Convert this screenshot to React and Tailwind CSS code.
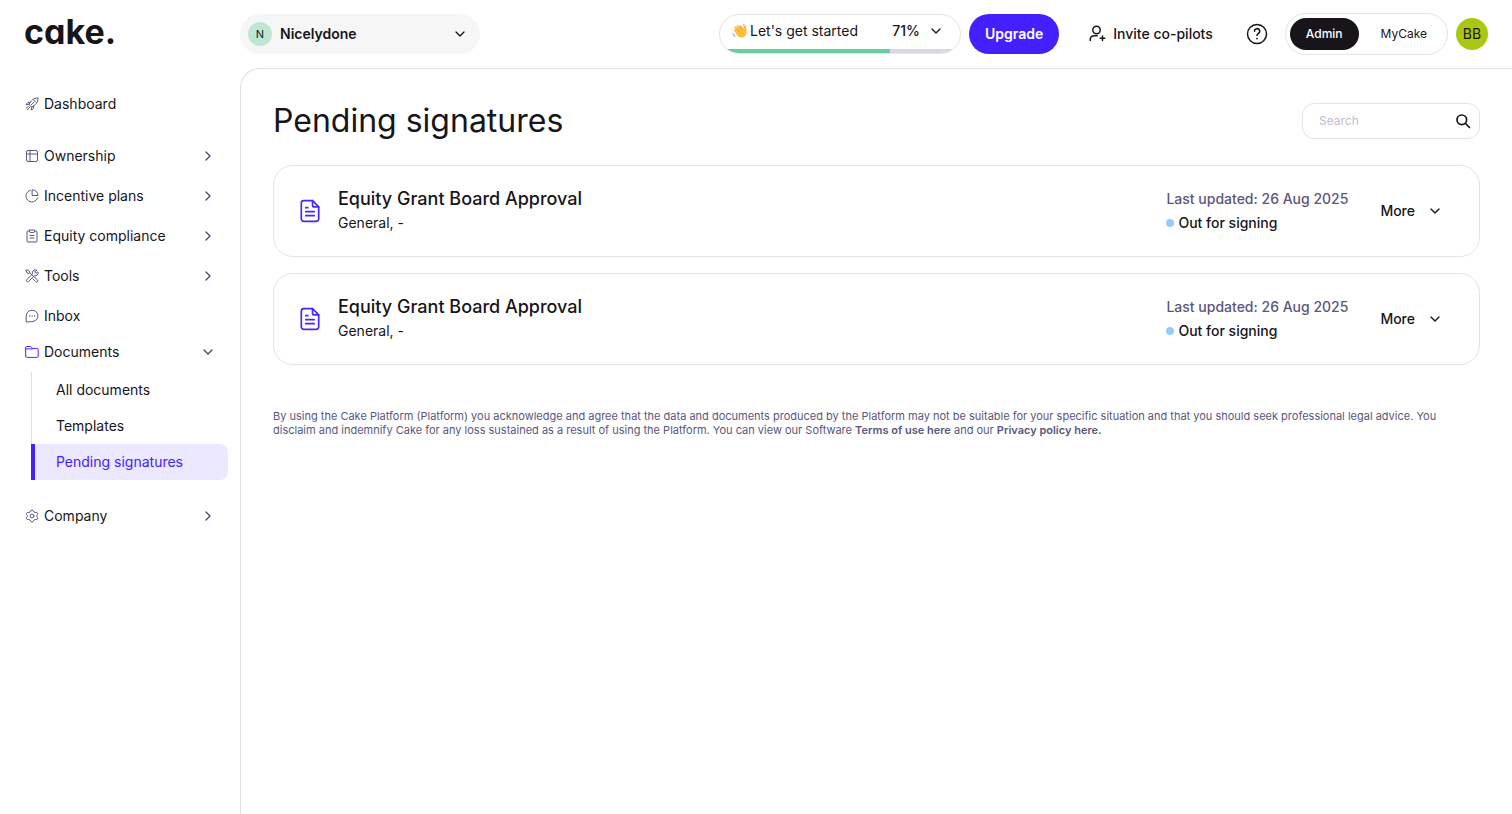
import React from 'react';
import { ChevronDown, ChevronRight } from 'lucide-react';

const Icon = ({ children, className = 'size-4', box = 16, width = 1 }) => (
  <svg
    viewBox={`0 0 ${box} ${box}`}
    fill="none"
    stroke="currentColor"
    strokeWidth={width}
    strokeLinecap="round"
    strokeLinejoin="round"
    aria-hidden="true"
    className={`shrink-0 ${className}`}
  >
    {children}
  </svg>
);

const RocketIcon = () => (
  <Icon>
    <path d="M5.2 8.2C6.8 4.4 9.6 2 14 2c.1 4.3-2.3 7.2-6.2 8.9z" />
    <path d="M6 6.3 3.8 6.5 2 8.7l3.2-.5M9.7 10l-.2 2.3L7.3 14l.5-3.1M7.3 8.8 10 6.1M4.3 10.2l-2 2M5.6 11.3l-2.5 2.5M9.8 4.2l2 2" />
  </Icon>
);

const TableIcon = () => (
  <Icon>
    <rect x="2.5" y="2.5" width="11" height="11" rx="1.5" />
    <path d="M2.5 6h11M6 2.5v11" />
  </Icon>
);

const PieIcon = () => (
  <Icon>
    <path d="M6.3 2.2A6 6 0 1 0 13.6 10" />
    <path d="M8.5 1.8a5.5 5.5 0 0 1 5.5 5.7H8.5z" />
  </Icon>
);

const ClipboardIcon = () => (
  <Icon>
    <path d="M5.5 3H4a1 1 0 0 0-1 1v9a1 1 0 0 0 1 1h8a1 1 0 0 0 1-1V4a1 1 0 0 0-1-1h-1.5" />
    <path d="M5.5 2h5v1.5a1 1 0 0 1-1 1h-3a1 1 0 0 1-1-1zM6 7.5h4M6 10h4" />
  </Icon>
);

const ToolsIcon = () => (
  <Icon>
    <path d="m2 2.5 1-.8 2.4 1.5.3 1.5L13.5 12a1.2 1.2 0 0 1-1.7 1.7L9 10.8M5.7 4.7l-.9.8-1.500-.3L2 2.5" />
    <path d="M12.5 2a3 3 0 0 0-3.9 3.9l-6 5.9a1.3 1.3 0 0 0 1.8 1.8l5.9-5.9A3 3 0 0 0 14 3.8l-1.8 1.5-1.3-1.2z" />
  </Icon>
);

const InboxIcon = () => (
  <Icon>
    <path d="M2.2 13.6V8a5.9 5.7 0 1 1 5.9 5.6z" />
    <path d="M5.6 8h.01M8.1 8h.01M10.6 8h.01" strokeWidth="1.4" />
  </Icon>
);

const FolderIcon = () => (
  <Icon>
    <path d="M1.7 12V3.7c0-.7.5-1.2 1.2-1.2h3.3c.5 0 .9.2 1.2.6l.9 1.3h4.500c.8 0 1.4.6 1.4 1.4V12c0 .8-.6 1.4-1.4 1.4H3.1c-.8 0-1.4-.6-1.4-1.4z" />
    <path d="M1.7 4.900h6.8" />
  </Icon>
);

const GearIcon = () => (
  <Icon>
    <path d="M6.9 2.6 8 1.9l1.1.7.6 1.2 1.4.8 1.3-.1 1.2.7v1.3l-.8 1.1v1l.8 1.1v1.2l-1.2.7-1.3-.1-1.4.8-.6 1.2-1.1.7-1.1-.7-.6-1.2-1.4-.8-1.3.1-1.2-.7V9.700l.8-1.1v-1l-.8-1.1V5.200l1.2-.7 1.3.1 1.4-.8z" />
    <circle cx="8" cy="8" r="1.9" />
  </Icon>
);

const InviteIcon = () => (
  <Icon className="size-5" box={20} width={1.5}>
    <circle cx="9.5" cy="6" r="3.7" />
    <path d="M3.2 16.5v-.7c0-2.5 1.8-4 4.2-4h2.8M13.2 14.3h4.6M15.5 12v4.6" />
  </Icon>
);

const HelpIcon = () => (
  <Icon className="size-6" box={24} width={1.5}>
    <circle cx="12" cy="12" r="9.5" />
    <path d="M9.5 9.3a2.6 2.6 0 1 1 3.9 2.2c-.9.5-1.4.9-1.4 1.9" />
    <path d="M12 16.6h.01" strokeWidth="1.8" />
  </Icon>
);

const SearchIcon = () => (
  <Icon className="size-4" width={1.7}>
    <circle cx="6.8" cy="6.8" r="4.800" />
    <path d="m10.500 10.500 4 4" />
  </Icon>
);

const DocumentIcon = () => (
  <Icon className="size-6" box={24} width={1.7}>
    <path d="M14.5 1.7H5.8a2.5 2.5 0 0 0-2.5 2.5v15.6a2.5 2.5 0 0 0 2.5 2.5h12.4a2.5 2.5 0 0 0 2.5-2.5V7.9z" />
    <path d="M14.5 1.7v4.2a2 2 0 0 0 2 2h4.2M7.8 8.7h2M7.8 12.7h8.4M7.8 16.7h8.4" />
  </Icon>
);

const WaveIcon = () => (
  <svg viewBox="0 0 16 16" aria-hidden="true" className="size-4 shrink-0">
    <g fill="none" stroke="#fbbf3c" strokeWidth="2.2" strokeLinecap="round">
      <path d="m3 7.5 4.2 4.2M3.4 4.6l5.4 5.4M5.7 3.2l5 5.2M8.4 3.3l3.4 3.7" />
    </g>
    <path
      fill="#fbbf3c"
      d="m4.5 8.5 7-2.5.5-2.3c.3-1 1.7-.8 1.900.2.3 1.5.8 2.8.8 4.8 0 3.5-2.6 5.8-5.5 5.8-1.8 0-3-1.2-5-3.3z"
    />
    <path d="m4.3 6.2 3.2 3.2M5.7 4.9l3.4 3.4M7.9 4.2l2.6 2.7" fill="none" stroke="#df9020" strokeWidth=".5" />
    <path
      d="M11 1.2c1.3.2 2.2.9 2.7 2M11.2 2.7c.6.2.9.5 1.2 1M.7 10.5c.2 1.5 1 2.5 2.2 3.2M2 11.2c.2.8.6 1.2 1.2 1.6"
      fill="none"
      stroke="#8b98a5"
      strokeWidth=".7"
      strokeLinecap="round"
    />
  </svg>
);

const NavItem = ({ icon, label, chevron }) => (
  <button type="button" className="flex h-10 w-full items-center gap-1 pr-3 pl-6 text-left">
    <span className="text-[#5b567d]">{icon}</span>
    <span className="grow">{label}</span>
    {chevron && <ChevronRight className="size-4 text-[#4d4870]" />}
  </button>
);

const Sidebar = () => (
  <nav className="w-60 shrink-0 pt-4 pr-3 text-sm">
    <NavItem icon={<RocketIcon />} label="Dashboard" />
    <div className="mt-3">
      <NavItem icon={<TableIcon />} label="Ownership" chevron />
      <NavItem icon={<PieIcon />} label="Incentive plans" chevron />
      <NavItem icon={<ClipboardIcon />} label="Equity compliance" chevron />
      <NavItem icon={<ToolsIcon />} label="Tools" chevron />
      <NavItem icon={<InboxIcon />} label="Inbox" />
    </div>
    <button type="button" className="flex h-8 w-full items-center gap-1 pr-3 pl-6 text-left">
      <span className="text-[#4a25ff]"><FolderIcon /></span>
      <span className="grow">Documents</span>
      <ChevronDown className="size-4 text-[#4d4870]" />
    </button>
    <ul className="mt-1 mb-4 ml-8">
      <li className="-ml-px border-l border-[#e0e0e4]">
        <a href="#all" className="flex h-9 items-center pl-6">All documents</a>
      </li>
      <li className="-ml-px border-l border-[#e0e0e4]">
        <a href="#templates" className="flex h-9 items-center pl-6">Templates</a>
      </li>
      <li className="-ml-px">
        <a
          href="#pending"
          aria-current="page"
          className="flex h-9 items-center rounded-r-lg border-l-4 border-[#4520ff] bg-[#ece8ff] pl-[21px] text-[#4520ff]"
        >
          Pending signatures
        </a>
      </li>
    </ul>
    <NavItem icon={<GearIcon />} label="Company" chevron />
  </nav>
);

const Header = () => (
  <header className="flex h-17 items-center pr-6">
    <a
      href="#home"
      className="w-60 shrink-0 pb-1 pl-6 text-[34px] leading-10 font-bold"
      style={{ fontFeatureSettings: '"cv11"' }}
    >
      cake.
    </a>
    <button type="button" className="flex h-10 w-60 items-center gap-2 rounded-[20px] bg-[#f6f6f6] px-2">
      <span className="flex size-6 items-center justify-center rounded-full bg-[#bde7d2] text-[11px]">N</span>
      <span className="grow text-left text-sm font-semibold">Nicelydone</span>
      <ChevronDown className="mr-1 size-4" />
    </button>
    <div className="ml-auto flex items-center">
      <button
        type="button"
        className="relative flex h-10 w-[242px] items-center overflow-hidden rounded-full border border-[#e4e4e7] pr-4 pb-1.5 pl-3 text-sm"
      >
        <WaveIcon />
        <span className="ml-0.5 grow text-left">Let's get started</span>
        <span className="mr-2 font-medium">71%</span>
        <ChevronDown className="size-4" />
        <span className="absolute inset-x-0 bottom-0 h-1 bg-[#d8d8e0]">
          <span className="block h-full bg-[#67cf9d]" style={{ width: '71%' }} />
        </span>
      </button>
      <button type="button" className="ml-2 h-10 rounded-full bg-[#4520ff] px-4 text-sm font-semibold text-white">
        Upgrade
      </button>
      <button type="button" className="ml-7 flex items-center gap-1.5 text-sm font-medium">
        <InviteIcon />
        Invite co-pilots
      </button>
      <button type="button" aria-label="Help" className="ml-8">
        <HelpIcon />
      </button>
      <div className="ml-4 flex h-[42px] items-center gap-0.5 rounded-full border border-[#e4e4e7] px-1 text-xs">
        <button type="button" className="h-8 rounded-full bg-[#17151a] px-4 font-medium text-white">Admin</button>
        <button type="button" className="h-8 pr-4 pl-5">MyCake</button>
      </div>
      <button type="button" className="ml-2 size-8 rounded-full bg-[#aac811] text-sm">BB</button>
    </div>
  </header>
);

const documents = [
  { id: 1, title: 'Equity Grant Board Approval', type: 'General, -', updated: '26 Aug 2025', status: 'Out for signing' },
  { id: 2, title: 'Equity Grant Board Approval', type: 'General, -', updated: '26 Aug 2025', status: 'Out for signing' },
];

const DocumentCard = ({ doc }) => (
  <article className="flex h-[92px] items-center rounded-[20px] border border-[#e4e4e7] pr-9 pl-6">
    <span className="text-[#4a25ff]"><DocumentIcon /></span>
    <div className="ml-4 grow">
      <h2 className="text-lg leading-6 font-medium">{doc.title}</h2>
      <p className="text-sm leading-6">{doc.type}</p>
    </div>
    <div className="text-sm font-medium">
      <p className="leading-6 text-[#5b567d]">Last updated: {doc.updated}</p>
      <p className="flex items-center gap-1 leading-6">
        <span className="size-2 rounded-full bg-[#96cbff]" />
        {doc.status}
      </p>
    </div>
    <button type="button" className="ml-8 flex items-center gap-3 text-sm font-medium">
      More
      <ChevronDown className="size-4" />
    </button>
  </article>
);

export default function App() {
  return (
    <div className="flex min-h-screen flex-col bg-white font-['Inter',sans-serif] text-[#17151a]">
      <Header />
      <div className="flex grow">
        <Sidebar />
        <main className="grow rounded-tl-[20px] border-t border-l border-[#e0e0e4] px-8 pt-8">
          <div className="flex h-10 items-center justify-between">
            <h1 className="text-[32px] leading-10">Pending signatures</h1>
            <label className="flex h-9 w-[178px] items-center rounded-xl border border-[#e4e4e7] pr-2 pl-4">
              <input
                type="text"
                aria-label="Search"
                placeholder="Search"
                className="w-full min-w-0 text-xs outline-none placeholder:text-[#c0bdce]"
              />
              <SearchIcon />
            </label>
          </div>
          <div className="mt-6 flex flex-col gap-4">
            {documents.map((doc) => (
              <DocumentCard key={doc.id} doc={doc} />
            ))}
          </div>
          <p className="mt-11 text-[11px] leading-[14px] text-[#5b567d]">
            By using the Cake Platform (Platform) you acknowledge and agree that the data and documents produced by the
            Platform may not be suitable for your specific situation and that you should seek professional legal advice.
            You disclaim and indemnify Cake for any loss sustained as a result of using the Platform. You can view our
            Software <a href="#terms" className="inline-block font-semibold">Terms of use here</a> and our{' '}
            <a href="#privacy" className="inline-block font-semibold">Privacy policy here.</a>
          </p>
        </main>
      </div>
    </div>
  );
}
